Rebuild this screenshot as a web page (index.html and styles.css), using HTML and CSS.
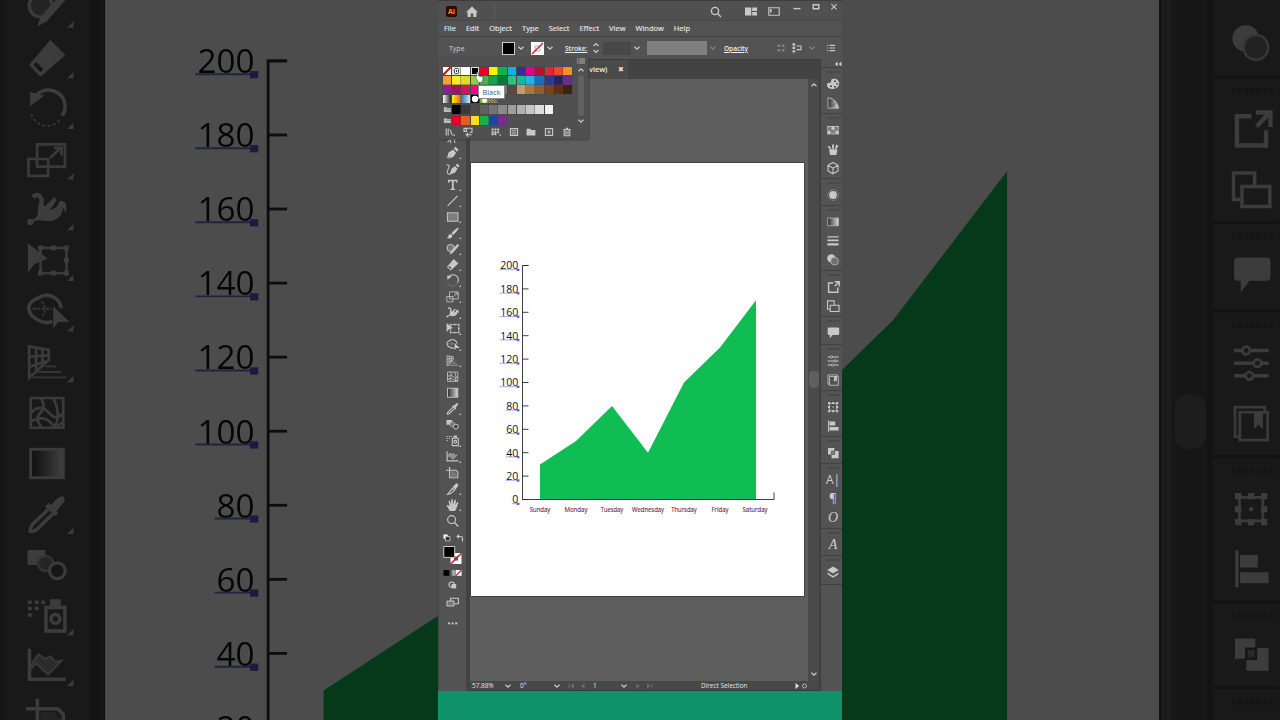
FILE: index.html
```html
<!doctype html>
<html lang="en">

<head>
    <meta charset="utf-8">
    <meta name="viewport" content="width=device-width, initial-scale=1.0">
    <title>Area graph</title>
    <link rel="stylesheet" href="styles.css">
</head>

<body>
    <!-- Icons -->
    <svg class="sprite" width="0" height="0">
        <defs>
            <linearGradient id="fade">
                <stop offset="0" stop-color="#2c2c2c" />
                <stop offset="1" stop-color="#d8d8d8" />
            </linearGradient>
        </defs>
        <symbol id="wand" viewBox="0 0 16 16"><path d="M3 13L8 8M7 10h6M6 11v3M10 10v4" class="ln" /></symbol>
        <symbol id="pen" viewBox="0 0 16 16"><path d="M2.3 13.6L4 7.6 8.3 4.6 11.5 7.8 8.6 12 3.2 13.8 6.6 10.2zM9.2 3.6L11 1.8 14 4.9 12.2 6.8z" class="fl" /></symbol>
        <symbol id="curve" viewBox="0 0 16 16"><path d="M5 13.4L7 7.6 10.4 5.2 13 7.8 10.4 11.8zM11 4.2L12.6 2.4 15 5 13.6 6.6z" class="fl" /><path d="M2 4C5 3 5 6 3.4 8.5S2.5 14 6 13" class="ln" /></symbol>
        <symbol id="type" viewBox="0 0 16 16"><path d="M3.4 2.8h9.4v3h-1l-.5-1.5H9.1v7.3l1.5.4v1H5.8v-1l1.5-.4V4.3H5l-.6 1.5h-1z" class="fl" /></symbol>
        <symbol id="line" viewBox="0 0 16 16"><path d="M3 12.8L12.8 3" class="ln" /></symbol>
        <symbol id="rect" viewBox="0 0 16 16"><rect x="2.8" y="3.8" width="10.6" height="8.4" fill="#7c7c7c" stroke="#c6c6c6" /></symbol>
        <symbol id="brush" viewBox="0 0 16 16"><path d="M13.8 2.6C12 3 8.5 6 6.8 8.4L8.6 10C11 8 13.6 5 14 3zM6 9c-2 .2-2 1.7-2.4 2.6-.3.7-.8 1-1.4 1.1 2 1.4 5.6 1 5.6-2.2z" class="fl" /></symbol>
        <symbol id="shaper" viewBox="0 0 16 16"><circle cx="6" cy="7" r="3.6" fill="#777" stroke="#c6c6c6" /><path d="M14.6 4.4L8 12l-3 1.6 1-3L12.8 3z" class="fl" /></symbol>
        <symbol id="eraser" viewBox="0 0 16 16"><path d="M9.1 1.9L13.8 6.6 6.4 13.2Q6 13.5 5.6 13.1L2.7 10.2Q2.3 9.8 2.7 9.4z" class="fl" /><path d="M4.2 9.3L6.4 11.6" stroke="#4a4a4a" stroke-width="1.3" /></symbol>
        <symbol id="rotate" viewBox="0 0 16 16"><path d="M4.2 3.9A5.1 5 0 0 1 12.8 9.8" class="ln" /><path d="M2.6 2.4L7.2 3.4 2.8 6.8z" class="fl" /><path d="M12 11.2A5.1 5 0 0 1 3 8.8" class="th" stroke-dasharray=".9 .8" /></symbol>
        <symbol id="scale" viewBox="0 0 16 16"><path d="M4.9 2.9h8.8v7H4.9zM2.2 7.5h6.2v5.3H2.2zM9 7.2l3.2-3M10.2 4h2.4v2.4" class="md" /></symbol>
        <symbol id="width" viewBox="0 0 16 16"><path d="M3.6 3.6C5 1.8 6.8 3.4 6.2 6" class="ln wide" /><path d="M2.6 11.6L5 9.6 5.4 5.4 7.4 6.4 10.4 3.4 11 4.6 9 7.6Q11.4 7.4 12 4.8 14.8 4.2 14 8.6L13.2 6.8Q12.6 10.8 8.6 11.2L5.4 10.8z" class="fl" /><circle cx="2.8" cy="11.4" r="1" class="fl" /></symbol>
        <symbol id="free" viewBox="0 0 16 16"><path d="M2 2.1v9.2l2.2-2.7L8.2 7z" class="fl" /><path d="M6 3.6h8.2v8H6z" class="md" /><path d="M5.2 2.8h1.5v1.5H5.2zM9.3 2.8h1.5v1.5H9.3zM13.4 2.8h1.5v1.5h-1.5zM13.4 6.8h1.5v1.5h-1.5zM13.4 10.8h1.5v1.5h-1.5zM9.3 10.8h1.5v1.5H9.3zM5.2 10.8h1.5v1.5H5.2z" class="fl" /></symbol>
        <symbol id="builder" viewBox="0 0 16 16"><path d="M9.7 10.8C7 12 2.4 9.6 2.3 6.6 2.2 4.4 4.5 3.9 6 3c3-1.4 6 .6 6.6 3.6" class="ln" /><path d="M3.5 6.8h6M6.3 4.5q2 2 .3 4.6" class="th" stroke-dasharray="1 .4" /><path d="M10 5.9v7.2l1.6-2.1 3.4-.1z" class="fl" /></symbol>
        <symbol id="persp" viewBox="0 0 16 16"><path d="M2.4 2.7v10L8.6 7V3.8zM2.4 6l6-.5M2.4 9.2l5.2-1.8M4.6 3v7.4M6.6 3.4v5" class="md" /><path d="M2.4 12.5H14M5 10.8h7.6M7.4 9H11" class="th" /></symbol>
        <symbol id="mesh" viewBox="0 0 16 16"><path d="M2.9 3h10.3v9.4H2.9zM3 7.6q3-3 5.6 0t4.6 0M6 3q2 2.6 0 4.6T6.4 12.4M10 3q2.6 4.6.6 9.4M3 10.4q4-2 6 .2t4 0" class="md" /></symbol>
        <symbol id="grad" viewBox="0 0 16 16"><rect x="2.9" y="3.2" width="10.3" height="9" fill="url(#fade)" stroke="#c6c6c6" stroke-width=".9" /></symbol>
        <symbol id="dropper" viewBox="0 0 16 16"><path d="M8.4 6.2L3.4 11Q2.2 13.2 3 13.2 4.2 13.2 5 12.4L9.9 7.6" class="ln" /><path d="M7.4 5.2L8.6 4.2 9.4 4.8 11 3Q13.2 1.4 13.6 2.6 14 3.6 11.6 6L11 6.6 11.6 7.4 10.6 8.4z" class="fl" /></symbol>
        <symbol id="blend" viewBox="0 0 16 16"><path d="M1.9 3h5.6v4.8H1.9z" class="fl" /><circle cx="7.6" cy="7.3" r="2.4" fill="#777" stroke="#aaa" stroke-width=".8" /><circle cx="11.3" cy="9.6" r="2.5" fill="#4a4a4a" stroke="#c6c6c6" /></symbol>
        <symbol id="spray" viewBox="0 0 16 16"><path d="M7.7 5.2h6v7.4h-6z" class="ln" /><circle cx="10.7" cy="8.8" r="1.4" class="ln" /><path d="M9 2.6h3.4v2.2H9zM2 3h1.2v1.1H2zM4.2 3h1.2v1.1H4.2zM6.2 3h1.2v1.1H6.2zM2 5h1.2v1.1H2zM4.2 5h1.2v1.1H4.2zM2 7h1.2v1.1H2z" class="fl" /></symbol>
        <symbol id="graph" viewBox="0 0 16 16"><path d="M2.5 2.2v9.7h11.4" class="ln" /><path d="M3 7.4L5.3 4 7.4 5.4 9.2 4.6 10.6 6.4 12.6 6 8.4 10.4 4.6 6.8 3 8.6z" fill="#8e8e8e" stroke="#bbb" stroke-width=".6" /></symbol>
        <symbol id="board" viewBox="0 0 16 16"><path d="M5 2v3M1.4 5.2h3M5 5.2h6.4l1.8 1.8v5.8H5z" class="ln" /><path d="M6 6.2h5v2h1.6v4H6z" fill="#777" /></symbol>
        <symbol id="slice" viewBox="0 0 16 16"><path d="M3 13.4L7.8 7.4 10 9.2 6.2 12.6z" class="ln" /><path d="M8 6L11.6 2.3Q14 2.4 13.7 4.6L10.8 8.8z" class="fl" /></symbol>
        <symbol id="hand" viewBox="0 0 16 16"><path d="M5.2 14L2.2 9Q2 7.6 3.6 8.2L4.9 9.6 4 4.2Q4.6 3 5.4 4L6.6 7.6 6.6 2.6Q7.4 1.4 8.2 2.6L8.6 7.4 9.8 3Q10.6 2 11.3 3.2L10.9 7.8 12.4 5.2Q13.6 4.6 13.6 6L12 11 10.6 14z" class="fl" /></symbol>
        <symbol id="zoom" viewBox="0 0 16 16"><circle cx="7" cy="6.6" r="4" class="ln" /><path d="M9.8 9.6l4 4" class="ln wide" /></symbol>

        <symbol id="palette" viewBox="0 0 16 16"><path d="M2 9.2C1.6 6 5 7.4 6 6.2 6.6 5 5.4 3.6 7.4 3 11 2 14.4 4.4 14.2 7.6 14 11 11 13.2 7.4 13 4 12.8 2.2 11.6 2 9.2z" class="fl" /><path d="M9 4.4h2v1.5H9zM11.3 7h1.6v1.4h-1.6zM9 10h2v1.4H9zM5 9.6h2V11H5z" fill="#4a4a4a" /></symbol>
        <symbol id="guide" viewBox="0 0 16 16"><path d="M3 2.6Q12 4 13.6 13.2H3z" fill="url(#fade)" stroke="#c6c6c6" stroke-width=".8" /><path d="M3.6 12.6L7.8 4.6M3.6 12.6l7.6-4.4" stroke="#555" stroke-width=".5" /></symbol>
        <symbol id="grid" viewBox="0 0 16 16"><path d="M2.2 4h11.6v8.4H2.2z" class="fl" /><path d="M2.9 5h2.7v2.7H2.9zM10.4 5h2.7v2.7h-2.7zM6.6 8.8h2.7v2.6H6.6z" fill="#777" /><path d="M6 4v8.4M10 4v8.4M2.2 8.2h11.6" stroke="#4a4a4a" stroke-width=".6" /></symbol>
        <symbol id="brushes" viewBox="0 0 16 16"><path d="M4 8.2h8.4L11.4 14H5zM7.4 8L7 4.8Q8 1 9.2 4.8L8.8 8zM5 8L2.4 5.4 4.6 5 6.4 8zM10 8l1.2-4.6 2.4 1.4L11.4 8z" class="fl" /></symbol>
        <symbol id="cube" viewBox="0 0 16 16"><path d="M8 2.4l5 2.8v5.8l-5 2.8-5-2.8V5.2zM3 5.2l5 3 5-3M8 8.2v5.6" class="ln" /></symbol>
        <symbol id="sun" viewBox="0 0 16 16"><circle cx="8" cy="8" r="3.9" class="fl" /><circle cx="8" cy="8" r="5.4" fill="none" stroke="#a5a5a5" stroke-dasharray="1 1.1" /></symbol>
        <symbol id="gradpanel" viewBox="0 0 16 16"><rect x="2.7" y="4" width="10.8" height="7.8" fill="url(#fade)" stroke="#b0b0b0" stroke-width=".8" /></symbol>
        <symbol id="strokes" viewBox="0 0 16 16"><path d="M2.4 3.2h11.2v1.2H2.4zM2.4 6.4h11.2v1.8H2.4zM2.4 10.2h11.2v2.4H2.4z" class="fl" /></symbol>
        <symbol id="opacity" viewBox="0 0 16 16"><circle cx="6.4" cy="6.4" r="4.2" class="fl" /><circle cx="9.6" cy="9.2" r="3.9" fill="#707070" stroke="#b4b4b4" stroke-width=".8" /></symbol>
        <symbol id="export" viewBox="0 0 16 16"><path d="M8.2 4H3.6v9.2h9.2V8.4M9.8 7.2L13.4 3.4M9.6 2.8h4.6v4.6" class="ln wide" /></symbol>
        <symbol id="boards" viewBox="0 0 16 16"><path d="M4.6 11.3H2.5V2.9h6.7v4M5.2 7.2h8.8v6.3H5.2z" class="ln" /></symbol>
        <symbol id="comment" viewBox="0 0 16 16"><path d="M4 2.6h9q1.2 0 1.2 1.2v5q0 1.2-1.2 1.2H7.6L4.8 13.6V10H4Q2.7 10 2.7 8.8v-5Q2.7 2.6 4 2.6z" class="fl" /></symbol>
        <symbol id="props" viewBox="0 0 16 16"><path d="M2.7 4h2.6M7.8 4h5.8M2.7 8h6.2M11.4 8h2.2M2.7 12h3.6M8.8 12h4.8" class="ln" /><circle cx="6.5" cy="4" r="1.2" class="md" /><circle cx="10.1" cy="8" r="1.2" class="md" /><circle cx="7.5" cy="12" r="1.2" class="md" /></symbol>
        <symbol id="library" viewBox="0 0 16 16"><path d="M4.2 12.2H3V2.9h9.4v1.2M4.5 4.5h8.8v8.8H4.5z" class="md" /><path d="M9 4.6h2.8v5.2L10.4 8.4 9 9.8z" class="fl" /></symbol>
        <symbol id="transform" viewBox="0 0 16 16"><path d="M4.4 4.4h7.4v7.4H4.4z" class="md" /><path d="M3 3h2v2H3zM7.1 3h2v2h-2zM11.2 3h2v2h-2zM3 7.1h2v2H3zM11.2 7.1h2v2h-2zM3 11.2h2v2H3zM7.1 11.2h2v2h-2zM11.2 11.2h2v2h-2zM7.5 7.5h1.2v1.2H7.5z" class="fl" /></symbol>
        <symbol id="align" viewBox="0 0 16 16"><path d="M3.1 2.2h1v11.6h-1zM4.6 3.6h5.6v4H4.6zM4.6 9.1h9v3.4h-9z" class="fl" /></symbol>
        <symbol id="path" viewBox="0 0 16 16"><path d="M3 3h6.4v3H13.6v7.2H6.6V9.4H3z" class="fl" /><path d="M6.6 9.4V6.2h3v3.2z" fill="#8a8a8a" stroke="#4a4a4a" stroke-width=".8" /></symbol>
        <symbol id="layers" viewBox="0 0 16 16"><path d="M8 2.4L13.8 6 8 9.6 2.2 6z" class="fl" /><path d="M2.6 8.6L8 12l5.4-3.4v1.6L8 13.8l-5.4-3.6z" class="fl" /></symbol>
        <symbol id="chev" viewBox="0 0 8 8"><path d="M1.5 2.7L4 5.2 6.5 2.7" class="ln chevline" /></symbol>
        <symbol id="folder" viewBox="0 0 10 9"><path d="M1 2h3l.8 1H9v4.6H1z" fill="#bdbdbd" /><path d="M3 4.4h6" stroke="#555" stroke-width=".5" /></symbol>
    </svg>

    <!-- Enlarged, darkened copy of the workspace -->
    <div class="backdrop">
        <div class="stage" id="stage"></div>
    </div>

    <div class="phone">
        <div class="titlebar">
            <span class="logo">Ai</span>
            <svg class="home" viewBox="0 0 12 12"><path d="M6 .6L0 6.2h1.6V11h3.2V7.6h2.4V11h3.2V6.2H12z" class="fl" /></svg>
            <i class="sep"></i>
            <div class="title-tools">
                <svg width="12" height="12" viewBox="0 0 12 12"><circle cx="5" cy="5" r="3.6" class="ln wide" /><path d="M7.6 7.6L11 11" class="ln wide" /></svg>
                <svg width="12" height="9" viewBox="0 0 12 9"><path d="M0 .5h6.3v8H0zM7.2.5H12v3.6H7.2zM7.2 4.9H12v3.6H7.2z" class="fl" /></svg>
                <svg width="12" height="9" viewBox="0 0 12 9"><path d="M.8.8h10.4v7.4H.8z" class="ln" /><path d="M2 2h1.6v3.4H2z" class="fl" /></svg>
            </div>
            <div class="win">
                <svg viewBox="0 0 8 8"><path d="M.5 5.6h7" class="ln wide" /></svg>
                <svg viewBox="0 0 8 8"><path d="M1.2 1.8h5.6v4H1.2z" class="ln wide" /></svg>
                <svg viewBox="0 0 8 8"><path d="M1.4 1.2l5.2 5.2M6.6 1.2L1.4 6.4" class="ln" /></svg>
            </div>
        </div>

        <div class="menu">
            <span>File</span><span>Edit</span><span>Object</span><span>Type</span><span>Select</span><span>Effect</span><span>View</span><span>Window</span><span>Help</span>
        </div>

        <div class="control">
            <span class="mode">Type</span>
            <i class="fillbox"></i>
            <svg class="chev"><use href="#chev" /></svg>
            <svg class="nonebox" viewBox="0 0 13 13"><rect width="13" height="13" fill="#fff" /><path d="M4 4h5v5H4z" fill="none" stroke="#999" stroke-width=".8" /><path d="M1 12L12 1" stroke="#c8202f" stroke-width="1.5" /></svg>
            <svg class="chev"><use href="#chev" /></svg>
            <span class="link stroke">Stroke:</span>
            <svg class="step" viewBox="0 0 8 12"><path d="M1.5 4L4 1.6 6.5 4M1.5 8L4 10.4 6.5 8" class="ln wide" /></svg>
            <i class="field"></i>
            <svg class="chev"><use href="#chev" /></svg>
            <i class="profile"></i>
            <svg class="chev dim"><use href="#chev" /></svg>
            <span class="link opacity">Opacity</span>
            <div class="control-end">
                <svg class="dim" width="8" height="8" viewBox="0 0 8 8"><path d="M.5.5h2.6v2.6H.5zM4.9.5h2.6v2.6H4.9zM.5 4.9h2.6v2.6H.5zM4.9 4.9h2.6v2.6H4.9z" class="fl" /></svg>
                <svg width="10" height="10" viewBox="0 0 10 10"><path d="M.5.3h2.6v2.4H.5zM.5 3.7h2.6v2.4H.5zM.5 7.2h2.6v2.4H.5z" class="fl" /><path d="M4.4 3H9v3.6H4.4" class="ln" /></svg>
                <svg class="chev dim"><use href="#chev" /></svg>
                <svg width="8" height="8" viewBox="0 0 8 8"><path d="M2.6 1.4H8M2.6 4H8M2.6 6.6H8M.2 1.4h1M.2 4h1M.2 6.6h1" class="ln" /></svg>
            </div>
        </div>

        <div class="workspace" id="workspace">
            <div class="main">
                <div class="tabs"><span class="tab">view)<b>×</b></span></div>
                <div class="body">
                    <div class="toolbar">
                        <div id="tools"></div>
                        <svg class="colors" viewBox="0 0 29 104">
                            <path d="M5.5 4.5h4.2v4.2H5.5z" fill="#fff" /><path d="M7.5 6.5h4.4v4.4H7.5z" fill="#333" stroke="#bbb" />
                            <path d="M20 6.5h3q1.4 0 1.4 1.6v3.4" class="ln" /><path d="M18.2 6.5L21 4.2v4.6z" class="fl" />
                            <path d="M12.5 23h11v11h-11z" fill="#fff" /><path d="M16 26.5h4v4h-4z" fill="#535353" /><path d="M12.8 33.8L23.5 23.2" stroke="#c8202f" stroke-width="1.6" />
                            <path d="M5.8 16.5h10.9v10.9H5.8z" fill="#000" stroke="#c9c9c9" />
                            <path d="M5.5 40h5.6v5.8H5.5z" fill="#000" /><rect x="11.6" y="40" width="5" height="5.8" fill="url(#fade)" /><path d="M17.6 40h6v5.8h-6z" fill="#fff" /><path d="M18 45.6l5.4-5.4" stroke="#c8202f" stroke-width="1.3" />
                            <circle cx="13.6" cy="54.6" r="2.6" class="ln" /><path d="M13.6 54h4.6v4.4h-4.6z" class="fl" />
                            <path d="M12.6 68.3h7.8v5.4h-7.8z" class="ln" /><path d="M9 71h7v5H9z" fill="#777" stroke="#c6c6c6" />
                            <circle cx="11" cy="93.4" r="1.1" class="fl" /><circle cx="14.6" cy="93.4" r="1.1" class="fl" /><circle cx="18.2" cy="93.4" r="1.1" class="fl" />
                        </svg>
                    </div>
                    <div class="document">
                        <div class="view">
                            <div class="canvas">
                                <svg class="artboard" viewBox="471 163 333 433">
                                    <path d="M540 499.5V464.4L576 441 612 405.9 648 452.7 684 382.5 720 347.4 756 300.3V499.5z" fill="#0fbd53" />
                                    <path d="M528.5 265.5h-6v234H774v-7" class="axis" />
                                    <g id="ticks"></g>
                                    <g id="days"></g>
                                </svg>
                            </div>
                            <div class="scroll">
                                <svg class="chev up"><use href="#chev" /></svg>
                                <i class="thumb"></i>
                                <svg class="chev"><use href="#chev" /></svg>
                            </div>
                        </div>
                        <div class="status">
                            <span class="s-zoom">57.88%</span><svg class="chev"><use href="#chev" /></svg>
                            <span class="s-angle">0°</span><svg class="chev"><use href="#chev" /></svg>
                            <svg class="nav" viewBox="0 0 18 8"><path d="M.6 1.4h1v5.2h-1zM6 1.4v5.2L2.4 4zM16.6 1.4v5.2L13 4z" /></svg>
                            <span class="s-page">1</span><svg class="chev"><use href="#chev" /></svg>
                            <svg class="nav flip" viewBox="0 0 18 8"><path d="M.6 1.4h1v5.2h-1zM6 1.4v5.2L2.4 4zM16.6 1.4v5.2L13 4z" /></svg>
                            <span class="s-tool">Direct Selection</span>
                            <svg class="play" viewBox="0 0 14 8"><path d="M1.5 1v6L5.2 4z" fill="#ddd" /><circle cx="10.5" cy="4" r="2" class="md" /></svg>
                        </div>
                    </div>
                </div>
            </div>
            <div class="dock">
                <svg class="collapse" viewBox="0 0 8 6"><path d="M3.6.8v4.4L1 3zM7.4.8v4.4L4.8 3z" fill="#ddd" /></svg>
                <div id="panels"></div>
            </div>
        </div>

        <div class="strip"></div>

        <!-- Swatches flyout -->
        <div class="flyout">
            <div class="swatches" id="swatches"></div>
            <div class="flyscroll">
                <svg class="list" viewBox="0 0 8 6"><path d="M0 1h1.4M2.2 1H8M0 3h1.4M2.2 3H8M0 5h1.4M2.2 5H8" class="md" /></svg>
                <svg class="chev up"><use href="#chev" /></svg>
                <i></i>
                <svg class="chev"><use href="#chev" /></svg>
            </div>
            <div class="flybar">
                <svg viewBox="0 0 10 10"><path d="M1.2 1.4v7M3.2 1.4v7M5 2.4l2.4 6" class="ln" /><path d="M8.4 7.6h1.4V9H8.4z" class="fl" /></svg>
                <svg viewBox="0 0 10 10"><path d="M3 1.2h6v4H6.6M1 1.4h2.4v3H1zM3.4 7.8h5.4M5.2 5.8l-2 2 2 2" class="ln" /></svg>
                <svg viewBox="0 0 10 10" class="gap"><path d="M.6 1.6h2v2h-2zM3.4 1.6h2v2h-2zM6.2 1.6h2v2h-2zM.6 4.2h2v4h-2zM3.4 4.2h2v4h-2zM6.2 4.2h2v2h-2zM8.6 7.4H10v1.4H8.6z" class="fl" /></svg>
                <svg viewBox="0 0 10 10"><path d="M1.4 1.6h7.2v6.8H1.4z" class="ln" /><path d="M2.6 3.6h4.8M2.6 5.2h4.8M2.6 6.8h4.8" class="md" /></svg>
                <svg viewBox="0 0 10 10"><path d="M.6 1.8h3.6l1 1.2h4.2v5.4H.6z" class="fl" /></svg>
                <svg viewBox="0 0 10 10"><path d="M1.4 1.6h7.2v6.8H1.4zM5 3.2v3.6M3.2 5h3.6" class="ln" /></svg>
                <svg viewBox="0 0 10 10"><path d="M1.4 2.6h7.2M3.8 1.4h2.4M2.2 3v5.8h5.6V3M4 4v3.8M6 4v3.8" class="ln" /></svg>
            </div>
            <svg class="cursor" viewBox="0 0 11 13"><path d="M3.2 8.8L.8 5.6Q1.4 4.6 2.8 5.6L3 1.2Q4 0 4.8 1.2V4.6L9 5.6Q10.4 6.4 9.8 8.4L8.8 12H4.4z" fill="#fff" stroke="#444" stroke-width=".7" /></svg>
            <span class="tooltip">Black</span>
        </div>
    </div>

    <script src="script.js"></script>
</body>

</html>
```
FILE: styles.css
```css
body {
    margin: 0;
    width: 1280px;
    height: 720px;
    overflow: hidden;
    position: relative;
    background-color: #191919;
    font-family: "Open Sans", "Noto Sans", sans-serif;
    color: #dcdcdc;
}

.sprite {
    position: absolute;
}

.fl {
    fill: #c8c8c8;
}

.ln {
    fill: none;
    stroke: #c8c8c8;
    stroke-width: 1.1;
}

.md {
    fill: none;
    stroke: #c2c2c2;
    stroke-width: 0.85;
}

.th {
    fill: none;
    stroke: #b0b0b0;
    stroke-width: 0.6;
}

.wide {
    stroke-width: 1.4;
}

.chevline {
    stroke-width: 1.3;
}

.dim {
    opacity: 0.4;
}

svg {
    display: block;
    flex: none;
}

i {
    flex: none;
}

.chev {
    width: 8px;
    height: 8px;
}

.up {
    transform: rotate(180deg);
}

/***** backdrop *****/
.backdrop {
    position: absolute;
    inset: 0;
    overflow: hidden;
    filter: brightness(0.3) blur(0.6px);
}

.stage {
    width: 404px;
    height: 661px;
    margin: 0 auto;
    padding-top: 59px;
    transform: scale(3.165);
}

/***** app window *****/
.phone {
    position: relative;
    width: 404px;
    height: 720px;
    margin: 0 auto;
    background-color: #535353;
}

.titlebar {
    display: flex;
    align-items: center;
    height: 21px;
    padding-left: 8px;
    border-top: 1px solid #3d3d3d;
    border-bottom: 1px solid #484848;
    box-sizing: border-box;
    background-color: #505050;
}

.logo {
    width: 11px;
    height: 11px;
    margin-top: 2px;
    border-radius: 2px;
    background-color: #330600;
    color: #ff9a00;
    font-size: 7px;
    line-height: 11px;
    font-weight: bold;
    text-align: center;
}

.home {
    width: 12px;
    height: 12px;
    margin: 2px 0 0 9px;
}

.sep {
    width: 1px;
    height: 14px;
    margin-left: 16px;
    background-color: #5d5d5d;
}

.title-tools {
    display: flex;
    align-items: center;
    gap: 11px;
    margin: 2px 0 0 215px;
}

.title-tools svg:first-child {
    margin-right: 12px;
}

.win {
    display: flex;
    gap: 10.6px;
    margin: -7px 0 0 13px;
}

.win svg {
    width: 8px;
    height: 8px;
}

.menu {
    display: flex;
    align-items: center;
    gap: 10px;
    height: 15px;
    padding-left: 6px;
    border-bottom: 1px solid #424242;
    font-size: 7.5px;
    line-height: 13px;
    color: #e4e4e4;
    -webkit-text-stroke: 0.15px #e4e4e4;
}

.control {
    display: flex;
    align-items: center;
    height: 22px;
    font-size: 7px;
}

.mode {
    width: 54px;
    padding: 1px 0 0 11px;
    box-sizing: border-box;
    margin-right: 10px;
    color: #d2d2d2;
    flex: none;
}

.fillbox {
    width: 11px;
    height: 11px;
    border: 1px solid #ccc;
    background-color: #000;
    margin-right: 2px;
}

.nonebox {
    width: 13px;
    height: 13px;
    margin: 0 2px 0 6px;
}

.link {
    font-weight: 600;
    text-decoration: underline;
    color: #efefef;
    font-size: 6.5px;
    flex: none;
}

.stroke {
    width: 27px;
    margin-left: 11px;
}

.step {
    width: 8px;
    height: 12px;
}

.field {
    width: 28px;
    height: 13px;
    margin: 0 2px 0 3px;
    background-color: #484848;
}

.profile {
    width: 60px;
    height: 14px;
    margin: 0 2px 0 6px;
    background-color: #808080;
}

.opacity {
    margin-left: 7px;
    width: 53px;
}

.control-end {
    display: flex;
    align-items: center;
    gap: 7px;
}

.control-end .chev {
    margin: 0 4px 0 -1px;
}

.workspace {
    display: flex;
    height: 632px;
}

.main {
    width: 381px;
    flex: none;
}

.tabs {
    height: 20px;
    background-color: #434343;
    border-top: 1px solid #3c3c3c;
    box-sizing: border-box;
}

.tab {
    display: block;
    box-sizing: border-box;
    width: 190px;
    height: 19px;
    padding-left: 151px;
    background-color: #4b4b4b;
    font-size: 7.3px;
    line-height: 19px;
    font-weight: 600;
    color: #eee;
}

.tab b {
    margin-left: 10.5px;
    font-size: 10px;
    line-height: 10px;
    vertical-align: -0.5px;
}

.body {
    display: flex;
    height: 612px;
}

/***** tools *****/
.toolbar {
    width: 32px;
    height: 612px;
    padding-top: 50px;
    box-sizing: border-box;
    flex: none;
    border-right: 4px solid #424242;
    border-left: 1px solid #474747;
    background-color: #535353;
}

.tool {
    position: relative;
    width: 29px;
    height: 16px;
    margin-left: -1px;
}

.tool svg {
    width: 16px;
    height: 16px;
    margin: 0 6.5px;
    transform: translateX(-0.4px);
}

.tool.more::after {
    content: "";
    position: absolute;
    right: 5.6px;
    top: 12.4px;
    border-left: 2.4px solid transparent;
    border-bottom: 2px solid #c6c6c6;
}

.colors {
    width: 29px;
    height: 104px;
    margin: 1px 0 0 -1px;
}

/***** document *****/
.document {
    width: 349px;
}

.view {
    display: flex;
    height: 602px;
}

.canvas {
    width: 338px;
    padding: 84px 0 0 1px;
    box-sizing: border-box;
    background-color: #5e5e5e;
}

.artboard {
    width: 333px;
    height: 433px;
    background-color: #fff;
    box-shadow: 0 0 0 0.6px #303030;
}

.axis {
    fill: none;
    stroke: #2a2a2a;
    stroke-width: 0.9;
}

.ylabel {
    font-size: 10.5px;
    text-anchor: end;
    fill: #111;
}

.day {
    font-size: 6.3px;
    text-anchor: middle;
    fill: #6d1f52;
    stroke: #6d1f52;
    stroke-width: 0.12;
}

.scroll {
    display: flex;
    flex-direction: column;
    align-items: center;
    width: 11px;
    padding: 2px 0 3px;
    box-sizing: border-box;
    background-color: #4a4a4a;
}

.thumb {
    width: 10px;
    height: 17px;
    margin: 282px 0 auto;
    border-radius: 4px;
    background-color: #5f5f5f;
}

.status {
    display: flex;
    align-items: center;
    height: 10px;
    background-color: #484848;
    border-bottom: 1px solid #383838;
    box-sizing: border-box;
    font-size: 6.4px;
    line-height: 9px;
    color: #e6e6e6;
    white-space: nowrap;
}

.status span {
    flex: none;
    box-sizing: border-box;
}

.s-zoom {
    width: 34px;
    padding-left: 2px;
}

.s-angle {
    width: 41px;
    padding-left: 8px;
}

.nav {
    width: 18px;
    height: 8px;
    margin-left: 7px;
    fill: #6c6c6c;
}

.s-page {
    width: 34px;
    padding-left: 7px;
}

.flip {
    transform: scaleX(-1);
}

.s-tool {
    width: 139px;
    padding-left: 48px;
}

.play {
    width: 14px;
    height: 8px;
    margin-left: 2px;
}

/***** panel dock *****/
.dock {
    flex: 1;
    border-left: 2px solid #404040;
    background-color: #535353;
}

.collapse {
    width: 8px;
    height: 6px;
    margin: 2px 0 0 auto;
}

.group {
    padding: 6px 0 1px;
    border-top: 1px solid #404040;
    background-image: repeating-linear-gradient(90deg, #444 0 1px, #4f4f4f 1px 2px);
    background-size: 13px 2px;
    background-position: 6px 3px;
    background-repeat: no-repeat;
}

.group:nth-child(6) {
    padding-bottom: 2px;
}

.group:last-child {
    padding-bottom: 3px;
    border-bottom: 1px solid #404040;
}

.panel {
    display: flex;
    align-items: center;
    justify-content: center;
    height: 19px;
    margin-right: 1px;
    color: #cfcfcf;
}

.panel svg {
    width: 16px;
    height: 16px;
    margin-left: 4px;
}

.letter {
    padding-left: 4px;
    font-size: 12px;
    line-height: 19px;
}

.italic {
    font-family: "Liberation Serif", serif;
    font-style: italic;
    font-size: 14px;
}

.strip {
    height: 29px;
    background-color: #0f9268;
}

/***** swatches flyout *****/
.flyout {
    position: absolute;
    left: 0;
    top: 57px;
    width: 150px;
    height: 82px;
    background-color: #505050;
    box-shadow: 1px 1px 2px #3c3c3c;
}

.swatches {
    position: absolute;
    left: 4.8px;
    top: 9.6px;
}

.swrow {
    display: flex;
    height: 9px;
    margin-bottom: 0.4px;
}

.swrow.spaced {
    margin-bottom: 1.6px;
}

.sw {
    width: 8.7px;
    height: 8.7px;
    margin-right: 0.58px;
    box-shadow: 0 0 0 0.4px #444;
}

.sw.folder {
    box-shadow: none;
}

.sw.on {
    box-shadow: inset 0 0 0 1px #ddd;
}

.none {
    background: linear-gradient(135deg, #fff 42%, #d0202f 42% 58%, #fff 58%);
    transform: scaleX(-1);
}

.sw.none {
    transform: scaleX(1);
}

.reg {
    background: radial-gradient(circle, #333 0 1px, #eee 1px 2px, #555 2px 3px, #ddd 3px);
}

.dot {
    background: radial-gradient(circle, #fff 0 3.2px, #000 3.6px);
}

.leaf {
    background: radial-gradient(circle at 50% 70%, #fff 0 2px, #7fb23c 2.6px);
}

.weave {
    background: repeating-linear-gradient(45deg, #b08968 0 1px, #5d5149 1px 2px);
}

.flyscroll {
    position: absolute;
    left: 138px;
    top: 1px;
    width: 10px;
    display: flex;
    flex-direction: column;
    align-items: center;
}

.flyscroll .list {
    width: 8px;
    height: 6px;
    margin-bottom: 2px;
}

.flyscroll i {
    width: 6px;
    height: 41px;
    margin: 1px 0;
    border-radius: 3px;
    background-color: #616161;
}

.flybar {
    position: absolute;
    left: 7px;
    bottom: 2px;
    display: flex;
    gap: 7.6px;
}

.flybar svg {
    width: 10px;
    height: 10px;
}

.flybar .gap {
    margin-left: 11px;
}

.cursor {
    position: absolute;
    left: 36px;
    top: 14px;
    width: 10px;
    height: 13px;
}

.tooltip {
    position: absolute;
    left: 40px;
    top: 28px;
    width: 25px;
    height: 12px;
    border: 1px solid #8a8a8a;
    background-color: #fff;
    color: #555;
    font-size: 7.4px;
    line-height: 12px;
    text-align: center;
}
```
FILE: script.js
```js
// tools with a flyout get the corner mark
const tools = ["wand", "pen+", "curve", "type+", "line+", "rect+", "brush+", "shaper+", "eraser+", "rotate+",
    "scale+", "width+", "free+", "builder+", "persp+", "mesh", "grad", "dropper+", "blend", "spray+",
    "graph+", "board", "slice+", "hand+", "zoom"];

const panels = [
    ["palette", "guide"],
    ["grid", "brushes", "cube"],
    ["sun"],
    ["gradpanel", "strokes", "opacity"],
    ["export", "boards"],
    ["comment"],
    ["props", "library"],
    ["transform", "align"],
    ["path"],
    ["=A|", "=¶", "~O"],
    ["~A"],
    ["layers"]
];

const swatches = [
    [".none", ".reg", "#fff", ".on", "#e4002b", "#fff200", "#12b24b", "#12b0ea", "#2e3192", "#e4008a", "#b0122f", "#e2243c", "#ea4a2c", "#f5921e"],
    ["#f7a035", "#fcee21", "#d9e021", "#8dd13f", "#45b449", "#12a24b", "#0b7a38", "#2bc27a", "#18b5a0", "#27b2e6", "#1570b8", "#2b3990", "#262262", "#662d91"],
    ["#8e1d8f", "#9e1463", "#d6145c", "#ec0a83", "#777", "#777", "#777", "#5a4a42", "#c49a6c", "#a5784c", "#8b5e3c", "#754520", "#603010", "#3c2413"],
    ["linear-gradient(90deg,#fff,#222)", "linear-gradient(90deg,#fff200,#f15a24)", "linear-gradient(90deg,#1b75bc,#cfe8fa)", ".dot", ".leaf", ".weave"],
    ["folder", "#000", "#3a3a3a", "#4d4d4d", "#606060", "#747474", "#8a8a8a", "#9e9e9e", "#b0b0b0", "#c6c6c6", "#dedede", "#f2f2f2"],
    ["folder", "#e4002b", "#ee5a1e", "#ffde17", "#12b24b", "#1e46a0", "#7a2a90"]
];

const days = [["Sunday", 540, 20.5], ["Monday", 576, 23], ["Tuesday", 612, 22.5], ["Wednesday", 648, 32], ["Thursday", 684, 25.5], ["Friday", 720, 17], ["Saturday", 755, 25]];

const icon = (id) => `<svg viewBox="0 0 16 16"><use href="#${id}"/></svg>`;

document.getElementById("tools").innerHTML = tools.map(t =>
    `<div class="tool${t.endsWith("+") ? " more" : ""}">${icon(t.replace("+", ""))}</div>`).join("");

document.getElementById("panels").innerHTML = panels.map(g =>
    `<div class="group">${g.map(p => {
        if (p[0] === "=") return `<div class="panel letter">${p.slice(1)}</div>`;
        if (p[0] === "~") return `<div class="panel letter italic">${p.slice(1)}</div>`;
        return `<div class="panel">${icon(p)}</div>`;
    }).join("")}</div>`).join("");

document.getElementById("swatches").innerHTML = swatches.map((row, r) =>
    `<div class="swrow${r > 2 ? " spaced" : ""}">${row.map(c => {
        if (c === "folder") return `<svg class="sw folder"><use href="#folder"/></svg>`;
        if (c === ".on") return `<i class="sw on" style="background-color:#000"></i>`;
        if (c[0] === ".") return `<i class="sw ${c.slice(1)}"></i>`;
        return `<i class="sw" style="background:${c}"></i>`;
    }).join("")}</div>`).join("");

// value axis
let ticks = "";
for (let v = 0; v <= 200; v += 20) {
    const y = 499.5 - v * 1.17;
    const left = 517.8 - String(v).length * 6.1;
    ticks += `<path d="M522.5 ${y}h6" class="axis"/>
        <text class="ylabel" x="518.2" y="${y + 3.9}">${v}</text>
        <path d="M${left} ${y + 4.2}H518" stroke="#6d6dd8" stroke-width=".6"/>
        <rect x="516.8" y="${y + 3.2}" width="2.6" height="2.3" fill="#5a5ad0"/>`;
}
document.getElementById("ticks").innerHTML = ticks;

document.getElementById("days").innerHTML = days.map(d =>
    `<text class="day" x="${d[1]}" y="512" textLength="${d[2]}" lengthAdjust="spacingAndGlyphs">${d[0]}</text>`).join("");

// copy the workspace behind the window, without the small text
const copy = document.getElementById("workspace").cloneNode(true);
copy.querySelectorAll(".tabs, .status, #days").forEach(el => el.replaceChildren());
copy.querySelectorAll("[id]").forEach(el => el.removeAttribute("id"));
copy.removeAttribute("id");
document.getElementById("stage").appendChild(copy);
```
